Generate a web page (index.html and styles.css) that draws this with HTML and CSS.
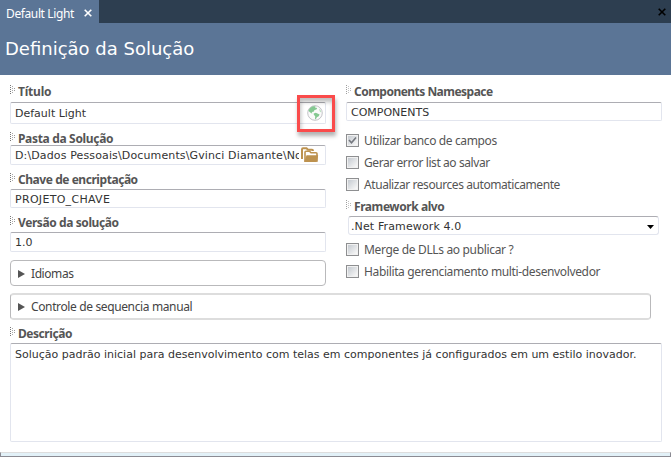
FILE: index.html
```html
<!DOCTYPE html>
<html lang="pt-BR">
<head>
<meta charset="utf-8">
<title>Definição da Solução</title>
<link rel="stylesheet" href="styles.css">
</head>
<body>
<svg class="defs" width="0" height="0">
  <defs>
    <g id="grip"><path d="M.5 0V9" stroke="#777" stroke-dasharray="1 1"/><path d="M2.5 1V8" stroke="#aaa" stroke-dasharray="1 1"/><path d="M4.5 3V6" stroke="#999" stroke-dasharray="1 1"/></g>
    <g id="close"><path d="M.7 .7 7.3 7.3M7.3 .7 .7 7.3" fill="none" stroke="currentColor" stroke-width="1.6"/></g>
  </defs>
</svg>
<div class="window">
  <div class="tabs">
    <div class="tab"><span class="t-tab">Default Light</span><svg width="8" height="8"><use href="#close"/></svg></div>
    <svg class="close-all" width="8" height="8"><use href="#close"/></svg>
  </div>
  <header class="header"><h1>Definição da Solução</h1></header>
  <main class="form">
    <div class="columns">
      <section class="left">
        <label class="label l-first"><svg width="5" height="9"><use href="#grip"/></svg><span class="t-titulo">Título</span></label>
        <div class="field f-title"><span class="t-default">Default Light</span>
          <svg class="globe" width="16" height="16" viewBox="0 0 16 16"><circle cx="8" cy="8" r="7.3" fill="#fafafa" stroke="#c3c3c8"/><path d="M1.4 5.7 3 3 5.7 1.3 8.5 1.2 8 2.6 10.2 3 9.4 4.5 7.5 5 6.6 6.7 4.5 7 5.4 8 4.9 8.5 2.9 7.3Z" fill="#84c891"/><path d="M6.7 8.4 8.8 7.8 12.6 9.4 11.7 11.3 9.9 12.3 8.7 14.4 8 13.8 8.2 11.2 6.8 9.8Z" fill="#84c891"/><path d="M12 3.4 13.5 5 14.3 7.5 12.8 6.4Z" fill="#b3dfba"/></svg>
          <div class="highlight"></div>
        </div>
        <label class="label l-folder"><svg width="5" height="9"><use href="#grip"/></svg><span class="t-pasta">Pasta da Solução</span></label>
        <div class="field f-folder"><span class="path t-path">D:\Dados Pessoais\Documents\Gvinci Diamante\No</span>
          <svg class="folder" width="18" height="16" viewBox="0 0 18 16"><path d="M1 12V2.5Q1 1.3 2 1.3H5.5L7 2.8H11Q12 2.8 12 4" fill="none" stroke="#bd924f" stroke-width="2"/><path d="M4 14V5.2Q4 4.2 5 4.2H8.5L10 5.7H15Q16 5.7 16 6.7V14Z" fill="#fff" stroke="#bd924f" stroke-width="1.6"/><path d="M3.2 15 5.5 8.2H17.2L15.6 15Z" fill="#bd924f"/></svg>
        </div>
        <label class="label l-key"><svg width="5" height="9"><use href="#grip"/></svg><span class="t-chave">Chave de encriptação</span></label>
        <div class="field f-key"><span class="t-projeto">PROJETO_CHAVE</span></div>
        <label class="label l-version"><svg width="5" height="9"><use href="#grip"/></svg><span class="t-versao">Versão da solução</span></label>
        <div class="field f-version"><span class="t-ver">1.0</span></div>
        <div class="expander"><svg width="7" height="8"><path d="M0 0 7 4 0 8Z" fill="#555"/></svg><span class="t-idiomas">Idiomas</span></div>
      </section>
      <section class="right">
        <label class="label l-first"><svg width="5" height="9"><use href="#grip"/></svg><span class="t-comp">Components Namespace</span></label>
        <div class="field f-namespace"><span class="t-components">COMPONENTS</span></div>
        <div class="checks">
          <label class="check"><span class="box"><svg width="9" height="9"><path d="M1 4 3.5 6.7 8 1.5" fill="none" stroke="#74777e" stroke-width="1.6"/></svg></span><span class="t-c1">Utilizar banco de campos</span></label>
          <label class="check"><span class="box"></span><span class="t-c2">Gerar error list ao salvar</span></label>
          <label class="check"><span class="box"></span><span class="t-c3">Atualizar resources automaticamente</span></label>
        </div>
        <label class="label l-framework"><svg width="5" height="9"><use href="#grip"/></svg><span class="t-frame">Framework alvo</span></label>
        <div class="field select"><span class="t-net">.Net Framework 4.0</span><svg width="7" height="4"><path d="M0 0H7L3.5 4Z"/></svg></div>
        <div class="checks second">
          <label class="check"><span class="box"></span><span class="t-c4">Merge de DLLs ao publicar ?</span></label>
          <label class="check"><span class="box"></span><span class="t-c5">Habilita gerenciamento multi-desenvolvedor</span></label>
        </div>
      </section>
    </div>
    <div class="expander wide"><svg width="7" height="8"><path d="M0 0 7 4 0 8Z" fill="#555"/></svg><span class="t-controle">Controle de sequencia manual</span></div>
    <label class="label l-desc"><svg width="5" height="9"><use href="#grip"/></svg><span class="t-desc">Descrição</span></label>
    <div class="field description"><span class="t-text">Solução padrão inicial para desenvolvimento com telas em componentes já configurados em um estilo inovador.</span></div>
  </main>
  <div class="status"></div>
</div>
</body>
</html>
```
FILE: styles.css
```css
* { box-sizing: border-box; }
body { margin: 0; background: #fff; color: #333; font: 12px/16px "Noto Sans", "Open Sans", sans-serif; overflow: hidden; }
svg { display: block; flex: none; }
.defs { position: absolute; }
span { white-space: nowrap; }
.window { display: flex; flex-direction: column; width: 671px; height: 457px; }
.tabs { display: flex; align-items: flex-start; justify-content: space-between; height: 23px; background: #2d3e50; }
.tab { display: flex; align-items: center; justify-content: space-between; width: 99px; height: 23px; padding: 4px 7px 0 6px; background: #5b7596; color: #fff; }
.tab svg { margin-bottom: 2px; }
.close-all { margin: 8px 5px 0 0; color: #000; }
.header { height: 52px; padding: 15px 5px 0; background: #5b7596; color: #fff; }
h1 { margin: 0; font: 18px/22px "DejaVu Sans", sans-serif; white-space: nowrap; }
.form { flex: 1; display: flex; flex-direction: column; padding: 5px 9px 0 10px; }
.columns { display: flex; gap: 20px; height: 206px; }
.left { width: 316px; }
.right { width: 316px; }
.label { display: flex; align-items: center; gap: 3px; height: 20px; padding-top: 1px; color: #555; font-weight: 700; }
.label svg { margin-bottom: 4px; }
.l-first { height: 22px; }
.l-folder { height: 14px; margin-top: 7px; }
.l-key, .l-version { margin-top: 4px; }
.right .l-first svg, .l-framework svg { opacity: .7; }
.field { display: flex; align-items: center; height: 20px; padding: 0 5px 0 4px; border: 1px solid #e2e5ee; border-top-color: #adadb3; border-radius: 2px; background: #fff; font: 11px/15px "DejaVu Sans", sans-serif; }
.f-title { position: relative; height: 22px; justify-content: space-between; padding-right: 2px; }
.highlight { position: absolute; left: 286px; top: -8px; width: 38px; height: 37px; border: 3px solid #fa4b4b; box-shadow: 1px 4px 4px rgba(0,0,0,.3), inset 1px 4px 4px rgba(0,0,0,.25); }
.f-folder { padding-right: 6px; }
.path { flex: 1; overflow: hidden; }
.folder { margin-left: 2px; }
.f-key, .f-namespace { height: 19px; padding-top: 2px; }
.expander { display: flex; align-items: center; gap: 6px; height: 26px; margin-top: 8px; padding: 1px 8px 0 7px; border: 1px solid #b9b9bb; border-radius: 4px; color: #444; }
.wide { width: 641px; height: 27px; margin-top: 7px; border-width: 2px 1px; border-color: #ddd #b9b9bb; }
.checks { margin-top: 9px; }
.second { margin-top: 4px; }
.check { display: flex; align-items: center; gap: 5px; height: 22px; color: #555; }
.box { display: grid; place-items: center; width: 13px; height: 13px; margin-bottom: 1px; border: 1px solid #8e8f91; background: linear-gradient(135deg, #bfc5cc, #f6f6f6 85%); box-shadow: inset 0 0 0 1px #f1f1f1; }
.select { justify-content: space-between; width: 311px; height: 19px; margin-left: 2px; padding: 2px 4px 0 2px; border-radius: 3px; }
.l-desc { margin-top: 3px; }
.description { width: 652px; height: 99px; align-items: flex-start; padding-top: 3px; }
.status { height: 5px; border: 1px solid #8b8b93; border-top-color: #ddd; background: #e2f1f8; }

/* Tracking per caption */
.t-tab { letter-spacing: -.38px; }
.t-titulo { letter-spacing: -.2px; }
.t-pasta { letter-spacing: -.33px; }
.t-chave { letter-spacing: -.45px; }
.t-versao { letter-spacing: -.41px; }
.t-comp { letter-spacing: -.52px; }
.t-frame { letter-spacing: -.43px; }
.t-desc { letter-spacing: -.45px; }
.t-c1 { letter-spacing: -.38px; }
.t-c2 { letter-spacing: -.42px; }
.t-c3 { letter-spacing: -.43px; }
.t-c4 { letter-spacing: -.34px; }
.t-c5 { letter-spacing: -.36px; }
.t-idiomas { letter-spacing: -.42px; }
.t-controle { letter-spacing: -.37px; }
.t-path { letter-spacing: .13px; }
.t-projeto { letter-spacing: .3px; }
.t-net { letter-spacing: .12px; }
```
